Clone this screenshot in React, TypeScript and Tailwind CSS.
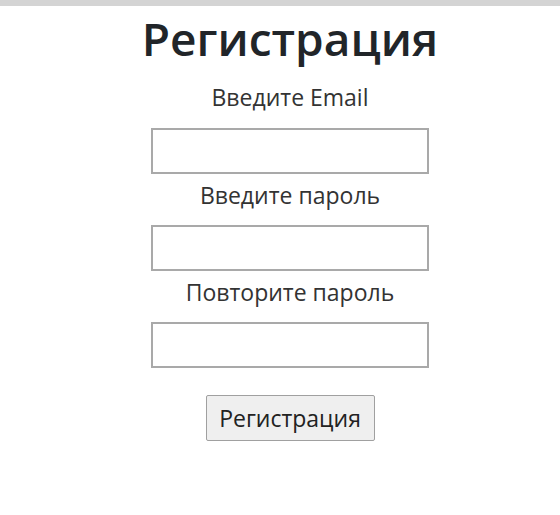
import React from "react";

export default function App() {
  return (
    <div className="min-h-[515px] bg-white font-['Open_Sans',sans-serif] text-[#212529]">
      <div className="h-[6px] bg-[#d4d4d4]" />
      <div className="flex flex-col items-center pl-[20px]">
        <h1 className="mt-[3px] text-[46px] leading-[58px] font-semibold">Регистрация</h1>
        <form className="flex flex-col items-center">
          <label className="mt-[15px] text-[23px] leading-[30px] text-[#333]">Введите Email</label>
          <input type="email" className="mt-[16px] h-[46px] w-[278px] border-2 border-[#a9a9a9] bg-white" />
          <label className="mt-[6px] text-[23px] leading-[30px] text-[#333]">Введите пароль</label>
          <input type="password" className="mt-[15px] h-[46px] w-[278px] border-2 border-[#a9a9a9] bg-white" />
          <label className="mt-[6px] text-[23px] leading-[30px] text-[#333]">Повторите пароль</label>
          <input type="password" className="mt-[15px] h-[46px] w-[278px] border-2 border-[#a9a9a9] bg-white" />
          <button type="button" className="mt-[27px] h-[46px] w-[169px] border border-[#a0a0a0] bg-[#efefef] text-[23px] text-[#222] rounded-[2px]">
            Регистрация
          </button>
        </form>
      </div>
    </div>
  );
}
